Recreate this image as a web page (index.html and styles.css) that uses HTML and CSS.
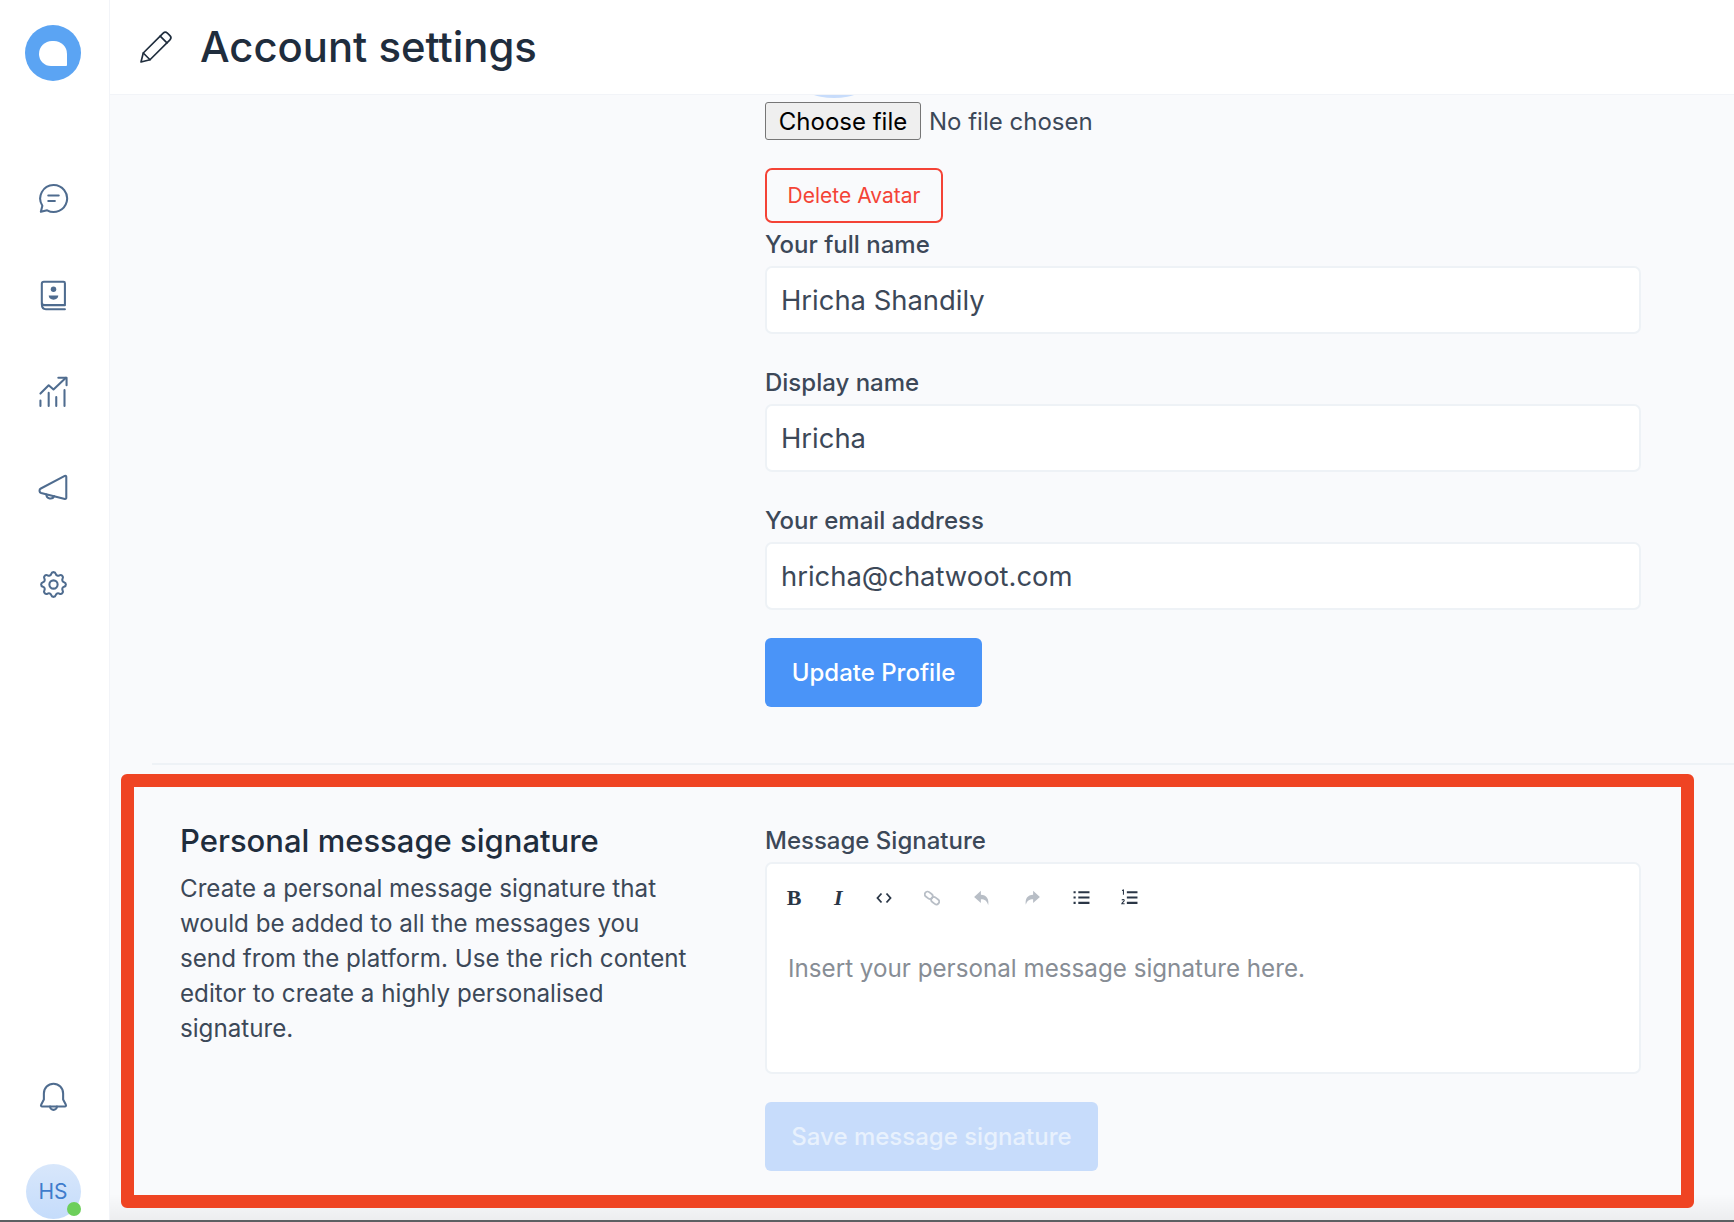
FILE: index.html
```html
<!DOCTYPE html>
<html lang="en">

<head>
    <meta charset="UTF-8">
    <meta name="viewport" content="width=device-width, initial-scale=1.0">
    <title>Account settings</title>
    <link rel="stylesheet" href="styles.css">
</head>

<body>
    <div class="app">
        <aside class="sidebar">
            <div class="logo"><span class="logo-bubble"></span></div>
            <nav class="nav-main">
                <a class="nav-item">
                    <svg viewBox="0 0 24 24" class="nav-icon"><path d="M12 2.200a9.800 9.800 0 1 1-4.600 18.400l-4.600 1.100 1.100-4.400A9.800 9.800 0 0 1 12 2.200z"/><path d="M8.200 9.800h7.600M8.200 13.800h4.800"/></svg>
                </a>
                <a class="nav-item">
                    <svg viewBox="0 0 24 24" class="nav-icon"><path d="M5 2h14.300a1 1 0 0 1 1 1v16H5.500a2 2 0 0 1-2-2V3.500A1.500 1.500 0 0 1 5 2z"/><path d="M3.500 18c0 2.500 1 4 3 4h13.800"/><circle cx="12" cy="7.500" r="2" class="solid"/><path d="M8.500 12h7c0 2-1.500 3-3.500 3s-3.500-1-3.500-3z" class="solid"/></svg>
                </a>
                <a class="nav-item">
                    <svg viewBox="0 0 24 24" class="nav-icon"><path d="M2.500 13.500 8.500 7.500l3.500 3 9-8.500"/><path d="M15.500 2h6v5.500"/><path d="M2.500 18.500V22.500M8.500 13V22.500M14 16V22.500M20 11V22.500"/></svg>
                </a>
                <a class="nav-item">
                    <svg viewBox="0 0 24 24" class="nav-icon"><path d="M21.300 3.500v15.300a.8.8 0 0 1-1 .8L3 15.300a1.800 1.800 0 0 1-.2-3.300L20.200 2.800a.8.8 0 0 1 1.100.7z"/><path d="M6.800 16.300a3 3 0 0 0 5.700 1.300"/></svg>
                </a>
                <a class="nav-item">
                    <svg viewBox="0 0 24 24" class="nav-icon"><path d="M10.325 4.317c.426-1.756 2.924-1.756 3.35 0a1.724 1.724 0 002.573 1.066c1.543-.94 3.31.826 2.37 2.37a1.724 1.724 0 001.065 2.572c1.756.426 1.756 2.924 0 3.35a1.724 1.724 0 00-1.066 2.573c.94 1.543-.826 3.31-2.37 2.37a1.724 1.724 0 00-2.572 1.065c-.426 1.756-2.924 1.756-3.35 0a1.724 1.724 0 00-2.573-1.066c-1.543.94-3.31-.826-2.37-2.37a1.724 1.724 0 00-1.065-2.572c-1.756-.426-1.756-2.924 0-3.35a1.724 1.724 0 001.066-2.573c-.94-1.543.826-3.31 2.37-2.37.996.608 2.296.07 2.572-1.065z"/><circle cx="12" cy="12" r="3"/></svg>
                </a>
            </nav>
            <div class="nav-bottom">
                <a class="nav-item">
                    <svg viewBox="0 0 24 24" class="nav-icon"><path d="M12 2a7 7 0 0 0-7 7v4.500L3 17.300a.8.8 0 0 0 .7 1.200h16.600a.8.8 0 0 0 .7-1.200l-2-3.800V9a7 7 0 0 0-7-7z"/><path d="M9.500 18.500a2.500 2.500 0 0 0 5 0"/></svg>
                </a>
                <div class="user-avatar">HS<span class="status-dot"></span></div>
            </div>
        </aside>

        <div class="main">
            <header class="page-header">
                <svg viewBox="0 0 24 24" class="header-icon"><path d="M2 22l1.500-6L16.800 2.700a2 2 0 0 1 2.800 0l1.700 1.700a2 2 0 0 1 0 2.800L8 20.500 2 22z"/><path d="M14.800 4.700l4.500 4.500M3.500 16l4.500 4.500"/></svg>
                <h1 class="page-title">Account settings</h1>
            </header>

            <div class="content">
                <section class="settings-row profile-row">
                    <div></div>
                    <form class="settings-form">
                        <div class="profile-pic"></div>
                        <div class="file-row">
                            <button type="button" class="file-btn">Choose file</button>
                            <span class="file-name">No file chosen</span>
                        </div>
                        <button type="button" class="delete-btn">Delete Avatar</button>
                        <label class="input-label first">Your full name</label>
                        <input type="text" class="input-field" value="Hricha Shandily">
                        <label class="input-label">Display name</label>
                        <input type="text" class="input-field" value="Hricha">
                        <label class="input-label">Your email address</label>
                        <input type="text" class="input-field" value="hricha@chatwoot.com">
                        <button type="button" class="submit-btn">Update Profile</button>
                    </form>
                </section>

                <section class="settings-row signature-row">
                    <div class="settings-info">
                        <h2 class="section-title">Personal message signature</h2>
                        <p class="section-text">Create a personal message signature that would be added to all the messages you send from the platform. Use the rich content editor to create a highly personalised signature.</p>
                    </div>
                    <form class="settings-form">
                        <label class="input-label sig-label">Message Signature</label>
                        <div class="editor">
                            <div class="toolbar">
                                <span class="tool tool-text bold">B</span>
                                <span class="tool tool-text italic">I</span>
                                <span class="tool tool-code"><svg viewBox="0 0 16 16" class="tool-icon"><path d="M5.500 3.500 1.500 8l4 4.500M10.500 3.500l4 4.500-4 4.500"/></svg></span>
                                <span class="tool tool-link muted"><svg viewBox="0 0 16 16" class="tool-icon"><rect x="0.500" y="2.500" width="8.500" height="5.500" rx="2.700" transform="rotate(38 4.700 5.200)"/><rect x="7" y="8" width="8.500" height="5.500" rx="2.700" transform="rotate(38 11.200 10.700)"/></svg></span>
                                <span class="tool tool-undo muted"><svg viewBox="0 0 16 16" class="tool-fill"><path d="M7 1.500 1 7l6 5.500V9c3.500 0 5.500 1.300 6.500 5.500C14.500 8.500 12 5.200 7 5z"/></svg></span>
                                <span class="tool tool-redo muted"><svg viewBox="0 0 16 16" class="tool-fill"><path d="M9 1.500 15 7l-6 5.500V9c-3.500 0-5.500 1.300-6.500 5C1.700 8.500 4 5.200 9 5z"/></svg></span>
                                <span class="tool tool-ul"><svg viewBox="0 0 16 16" class="tool-list"><path d="M5 3h10.500M5 8h10.500M5 13h10.500"/><path d="M.5 3h2M.5 8h2M.5 13h2"/></svg></span>
                                <span class="tool"><svg viewBox="0 0 16 16" class="tool-list"><path d="M5.500 3h10M5.500 8h10M5.500 13h10"/><path class="thin" d="M1 1.500 2.300 1v4.500M.8 10.500c.6-1 2.500-.8 2.200.5-.2.800-1.600 1.500-2.200 2.800H3.400"/></svg></span>
                            </div>
                            <div class="editor-text">Insert your personal message signature here.</div>
                        </div>
                        <button type="button" class="submit-btn save-btn">Save message signature</button>
                    </form>
                </section>
            </div>
            <div class="bottom-shade"></div>
        </div>
    </div>
    <div class="highlight"></div>
    <div class="window-edge"></div>
</body>

</html>
```

FILE: styles.css
```css
* {
    box-sizing: border-box;
}

body {
    font-family: Inter, "Noto Sans", sans-serif;
    background: #f9fafc;
    color: #3c4858;
    margin: 0;
    height: 100vh;
    overflow: hidden;
    display: flex;
    flex-direction: column;
}

.app {
    flex: 1;
    display: flex;
    min-height: 0;
}

/* sidebar */
.sidebar {
    width: 110px;
    background: #fff;
    border-right: 1px solid #f2f4f8;
    display: flex;
    flex-direction: column;
    align-items: center;
    padding: 25px 3px 0 0;
}

.logo {
    width: 56px;
    height: 56px;
    border-radius: 50%;
    background: #5ba4f3;
    display: flex;
    align-items: center;
    justify-content: center;
}

.logo-bubble {
    width: 28px;
    height: 25px;
    background: #fff;
    border-radius: 14px 14px 1px 13px;
}

.nav-main {
    margin-top: 101px;
    display: flex;
    flex-direction: column;
    gap: 63.500px;
}

.nav-item {
    display: block;
    width: 33px;
    height: 33px;
}

.nav-icon {
    width: 33px;
    height: 33px;
    fill: none;
    stroke: #4f6c8f;
    stroke-width: 1.500;
    stroke-linecap: round;
    stroke-linejoin: round;
}

.nav-icon .solid {
    fill: #4f6c8f;
    stroke: none;
}

.nav-bottom {
    margin-top: auto;
    display: flex;
    flex-direction: column;
    align-items: center;
    gap: 50px;
    padding-bottom: 1px;
}

.user-avatar {
    position: relative;
    width: 55px;
    height: 55px;
    border-radius: 50%;
    background: linear-gradient(#d8e7fb, #c5dcfb);
    color: #3f7ccc;
    font-size: 21px;
    display: flex;
    align-items: center;
    justify-content: center;
}

.status-dot {
    position: absolute;
    right: 0;
    bottom: 3px;
    width: 14px;
    height: 14px;
    border-radius: 50%;
    background: #6dcf5b;
}

/* main */
.main {
    flex: 1;
    min-width: 0;
    display: flex;
    flex-direction: column;
    position: relative;
}

.bottom-shade {
    position: absolute;
    left: 0;
    right: 0;
    bottom: 0;
    height: 26px;
    background: linear-gradient(rgba(0, 0, 0, 0), rgba(0, 0, 0, 0.05));
}

.page-header {
    height: 95px;
    background: #fff;
    border-bottom: 1px solid #f2f4f8;
    display: flex;
    align-items: center;
    padding: 0 0 1px 28px;
}

.header-icon {
    width: 36px;
    height: 36px;
    fill: none;
    stroke: #1f2d3d;
    stroke-width: 1.100;
    stroke-linejoin: round;
    stroke-linecap: round;
}

.page-title {
    margin: 0 0 0 26px;
    font-size: 41.800px;
    font-weight: 500;
    color: #1f2d3d;
}

.content {
    flex: 1;
    overflow: hidden;
}

.settings-row {
    display: grid;
    grid-template-columns: 585px 876px;
    margin-left: 70px;
}

.profile-row {
    padding-bottom: 56px;
}

.signature-row {
    margin-left: 42px;
    padding-left: 28px;
    border-top: 2px solid #eef2f6;
    padding-top: 59px;
}

.settings-info {
    padding-right: 73px;
}

.section-title {
    margin: 0;
    font-size: 31px;
    line-height: 34px;
    font-weight: 500;
    color: #1f2d3d;
}

.section-text {
    margin: 13px 0 0;
    font-size: 24.200px;
    line-height: 35px;
    color: #3c4858;
}

.settings-form {
    display: flex;
    flex-direction: column;
    align-items: flex-start;
}

.profile-pic {
    width: 138px;
    height: 138px;
    margin-top: -135px;
    border-radius: 50%;
    background: #c7dcfb;
}

.file-row {
    margin-top: 4px;
    display: flex;
    align-items: center;
    gap: 8px;
}

.file-btn {
    width: 156px;
    height: 38px;
    padding: 0;
    background: #efefef;
    border: 1px solid #767676;
    border-radius: 3px;
    font-family: inherit;
    font-size: 24px;
    color: #000;
}

.file-name {
    font-size: 24px;
}

.delete-btn {
    margin-top: 28px;
    width: 178px;
    height: 55px;
    background: transparent;
    border: 2px solid #f44336;
    border-radius: 7px;
    color: #f44336;
    font-family: inherit;
    font-size: 21px;
    font-weight: 400;
}

.input-label {
    font-size: 24px;
    line-height: 34px;
    font-weight: 500;
    color: #3c4858;
    margin: 32px 0 4px;
}

.input-label.first {
    margin-top: 5px;
}

.input-label.sig-label {
    margin-top: 0;
}

.input-field {
    width: 100%;
    height: 68px;
    padding: 0 14px;
    background: #fff;
    border: 2px solid #eef2f6;
    border-radius: 7px;
    font-family: inherit;
    font-size: 27.400px;
    color: #3c4858;
}

.submit-btn {
    margin-top: 28px;
    width: 217px;
    height: 69px;
    background: #4a94f8;
    border: none;
    border-radius: 6px;
    color: #fff;
    font-family: inherit;
    font-size: 24px;
    font-weight: 500;
}

.submit-btn.save-btn {
    width: 333px;
    background: #c7dcfb;
    color: #e8f1fd;
}

/* editor */
.editor {
    width: 100%;
    height: 212px;
    background: #fff;
    border: 2px solid #eef2f6;
    border-radius: 7px;
    padding: 0 4px 0 5px;
}

.toolbar {
    display: flex;
    align-items: center;
    height: 67px;
}

.tool {
    width: 47.500px;
    display: flex;
    align-items: center;
    justify-content: center;
    color: #2a3646;
}

.tool.muted {
    color: #b8bec6;
}

.tool-text {
    width: 44px;
    font-family: "Liberation Serif", serif;
    font-size: 22px;
    line-height: 24px;
    font-weight: 700;
}

.tool-text.italic {
    width: 44.500px;
    font-style: italic;
}

.tool-code {
    width: 46px;
}

.tool-link {
    width: 51px;
}

.tool-undo {
    width: 49px;
}

.tool-redo {
    width: 50px;
}

.tool-ul {
    width: 49px;
}

.tool-icon {
    width: 16px;
    height: 16px;
    fill: none;
    stroke: currentColor;
    stroke-width: 1.800;
}

.tool-fill {
    width: 18px;
    height: 18px;
    fill: currentColor;
}

.tool-list {
    width: 17px;
    height: 17px;
    fill: none;
    stroke: currentColor;
    stroke-width: 2;
}

.tool-list .thin {
    stroke-width: 1;
}

.editor-text {
    margin: 21px 0 0 16px;
    font-size: 24.200px;
    line-height: 34px;
    color: #878d95;
}

/* red annotation drawn over the screenshot */
.highlight {
    position: absolute;
    left: 121px;
    top: 774px;
    width: 1573px;
    height: 434px;
    border: 13px solid #ef4423;
    border-radius: 6px;
    pointer-events: none;
}

.window-edge {
    height: 2px;
    background: #5c5f62;
}
```
